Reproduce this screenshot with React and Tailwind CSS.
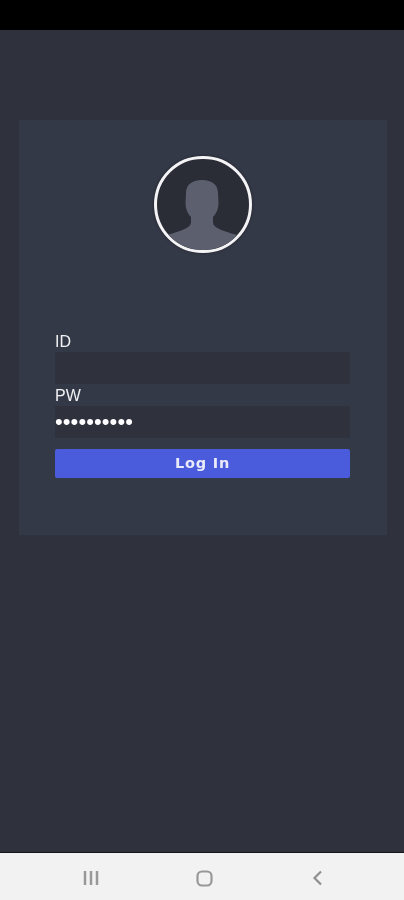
export default function App() {
  return (
    <div className="w-[404px] h-[900px] flex flex-col overflow-hidden bg-[#2f313d] font-['Liberation_Sans',sans-serif]">
      <div className="h-[30px] shrink-0 bg-black" />
      <main className="flex-1 pl-[19px] pr-[17px] pt-[90px] blur-[0.5px]">
        <section className="h-[415px] bg-[#343947] pl-[36px] pr-[37px] pt-[36px] flex flex-col">
          <div className="self-center w-[98px] h-[97px] rounded-full border-[3px] border-[#f4f4f6] bg-[#2b2d36] overflow-hidden shadow-[0_0_3px_#1f2029]">
            <svg viewBox="0 0 92 91" className="w-full h-full" aria-hidden="true">
              <path
                fill="#5c606e"
                d="M29 34C29 26 35 21 45 21C55 21 61 26 61 34L61.500 44C61.500 50 59 55 56 58L56 63C56 68 62 71 80 76L80 92L10 92L10 76C28 71 34 68 34 63L34 58C31 55 28.500 50 28.500 44Z"
              />
            </svg>
          </div>
          <label className="mt-[79px] h-[20px] text-[16px] leading-[20px] text-[#f1f1f3]">ID</label>
          <div className="h-[32px] bg-[#2f313c]" />
          <label className="mt-[2px] h-[20px] text-[16px] leading-[20px] text-[#f1f1f3]">PW</label>
          <div className="h-[32px] bg-[#2f313c] flex items-center text-[22px] leading-[32px] tracking-[0.100px] text-white">
            ••••••••••
          </div>
          <button className="mt-[11px] h-[29px] rounded-[2px] bg-[#4a5bdc] text-[#e9ebfa] text-[14.500px] font-bold tracking-[0.8px] font-['DejaVu_Sans',sans-serif] leading-[29px] text-center">
            Log In
          </button>
        </section>
      </main>
      <nav className="h-[48px] shrink-0 border-t-[1.500px] border-[#15161c] bg-[#f2f2f2] flex items-center justify-between pl-[83px] pr-[81px] pt-[3px]">
        <svg width="16" height="16" viewBox="0 0 16 16" aria-hidden="true">
          <path d="M2 1v14M8 1v14M14 1v14" stroke="#98989a" strokeWidth="2.500" fill="none" />
        </svg>
        <svg width="17" height="17" viewBox="0 0 17 17" aria-hidden="true" className="-ml-[2px]">
          <rect x="1.500" y="1.500" width="14" height="14" rx="4.500" stroke="#98989a" strokeWidth="2.200" fill="none" />
        </svg>
        <svg width="11" height="16" viewBox="0 0 11 16" aria-hidden="true">
          <path d="M9 1.500 2.500 8 9 14.500" stroke="#8f8f91" strokeWidth="2.200" fill="none" />
        </svg>
      </nav>
    </div>
  );
}
